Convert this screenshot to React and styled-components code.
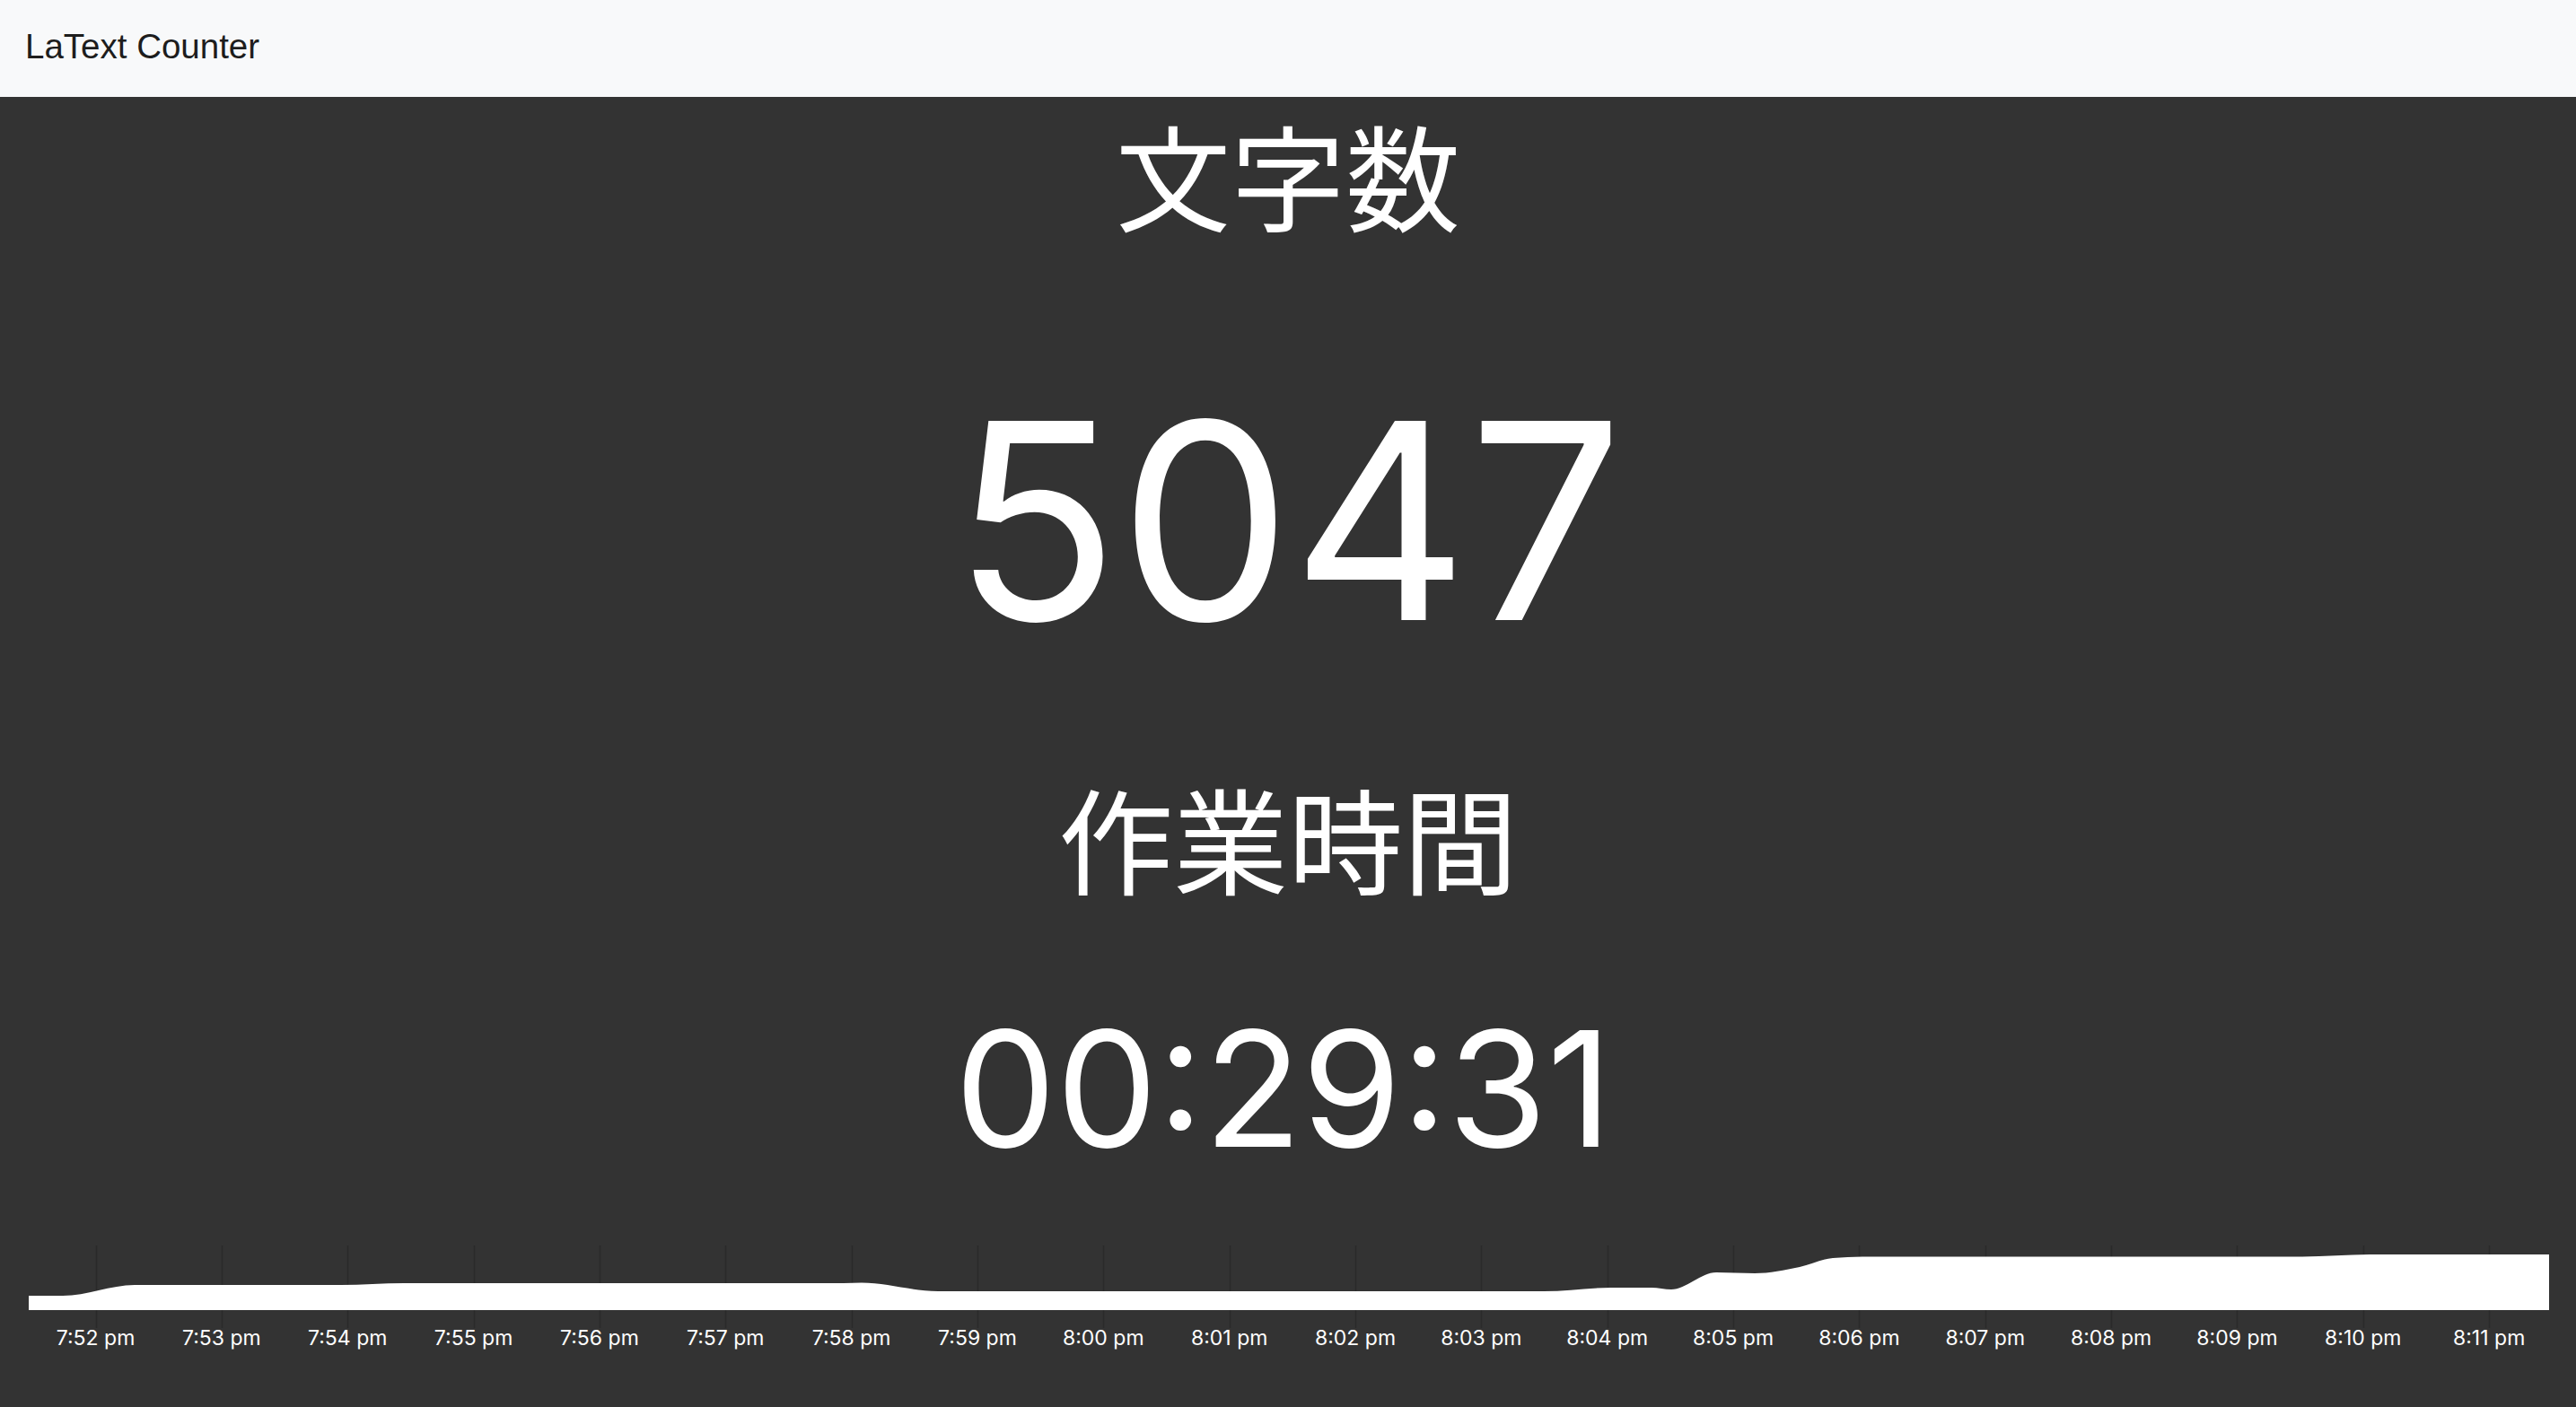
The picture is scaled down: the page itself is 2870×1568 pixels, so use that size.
import React from "react";
import styled, { createGlobalStyle } from "styled-components";

const Global = createGlobalStyle`
  html, body {
    margin: 0;
    padding: 0;
    height: 100%;
    background: #333333;
  }
  #root {
    min-height: 100%;
  }
`;

const Page = styled.div`
  display: flex;
  flex-direction: column;
  min-height: 1568px;
  background: #333333;
  font-family: "Liberation Sans", Arial, sans-serif;
`;

const Navbar = styled.nav`
  display: flex;
  align-items: center;
  height: 108px;
  padding: 0 0 4px 28px;
  box-sizing: border-box;
  background: #f8f9fa;
`;

const Brand = styled.span`
  font-family: "Liberation Sans", Arial, sans-serif;
  font-size: 38.5px;
  line-height: 1;
  color: #1d1d1d;
`;

const Main = styled.main`
  display: flex;
  flex-direction: column;
  align-items: center;
  color: #ffffff;
`;

const Heading = styled.div`
  font-family: "Noto Sans CJK JP", "Noto Sans CJK SC", sans-serif;
  font-size: 128px;
  line-height: 1;
  margin-top: ${(p) => p.$gap}px;
  white-space: nowrap;
`;

const Value = styled.div`
  font-family: Inter, "Liberation Sans", Arial, sans-serif;
  font-size: ${(p) => p.$size}px;
  line-height: 1;
  margin-top: ${(p) => p.$gap}px;
  padding-right: ${(p) => p.$shift || 0}px;
  white-space: nowrap;
`;

const ChartWrap = styled.div`
  margin-top: ${(p) => p.$gap}px;
  width: 100%;
  height: 150px;
`;

const ChartSvg = styled.svg`
  display: block;
  width: 100%;
  height: 150px;
`;

const TickLabel = styled.text`
  font-family: Inter, "Liberation Sans", Arial, sans-serif;
  font-size: 23px;
  fill: #ffffff;
`;

const points = [
  [32, 74], [70, 74], [150, 62], [380, 62], [450, 60], [940, 60], [960, 59.5],
  [1045, 69], [1720, 69], [1795, 65], [1840, 65], [1862, 67], [1912, 48],
  [1955, 49], [2005, 42], [2042, 32], [2075, 30.5], [2565, 30.5], [2640, 28], [2840, 28],
];

function monotonePath(pts, base) {
  const n = pts.length;
  const s = [];
  const h = [];
  for (let i = 0; i < n - 1; i++) {
    h.push(pts[i + 1][0] - pts[i][0]);
    s.push((pts[i + 1][1] - pts[i][1]) / h[i]);
  }
  const t = new Array(n).fill(0);
  t[0] = s[0];
  t[n - 1] = s[n - 2];
  for (let i = 1; i < n - 1; i++) {
    const s0 = s[i - 1];
    const s1 = s[i];
    const p = (s0 * h[i] + s1 * h[i - 1]) / (h[i - 1] + h[i]);
    t[i] =
      (Math.sign(s0) + Math.sign(s1)) *
        Math.min(Math.abs(s0), Math.abs(s1), 0.5 * Math.abs(p)) || 0;
  }
  let d = `M${pts[0][0]},${base} L${pts[0][0]},${pts[0][1]}`;
  for (let i = 0; i < n - 1; i++) {
    const [x0, y0] = pts[i];
    const [x1, y1] = pts[i + 1];
    const dx = (x1 - x0) / 3;
    d += ` C${x0 + dx},${y0 + dx * t[i]} ${x1 - dx},${y1 - dx * t[i + 1]} ${x1},${y1}`;
  }
  d += ` L${pts[n - 1][0]},${base} Z`;
  return d;
}

const labels = [
  "7:52 pm", "7:53 pm", "7:54 pm", "7:55 pm", "7:56 pm", "7:57 pm", "7:58 pm",
  "7:59 pm", "8:00 pm", "8:01 pm", "8:02 pm", "8:03 pm", "8:04 pm", "8:05 pm",
  "8:06 pm", "8:07 pm", "8:08 pm", "8:09 pm", "8:10 pm", "8:11 pm",
];

function Chart() {
  const step = 140.35;
  const x0 = 106.5;
  return (
    <ChartWrap $gap={67}>
      <ChartSvg viewBox="0 0 2870 150" preserveAspectRatio="none">
        {labels.map((l, i) => {
          const x = Math.round(x0 + i * step) + 0.5;
          return (
            <line
              key={"g" + i}
              x1={x}
              x2={x}
              y1={18}
              y2={110}
              stroke="#2a2a2a"
              strokeWidth="1.5"
            />
          );
        })}
        <path d={monotonePath(points, 90)} fill="#ffffff" />
        {labels.map((l, i) => (
          <TickLabel
            key={"t" + i}
            x={x0 + i * step}
            y={129}
            textAnchor="middle"
          >
            {l}
          </TickLabel>
        ))}
      </ChartSvg>
    </ChartWrap>
  );
}

export default function App() {
  return (
    <>
      <Global />
      <Page>
        <Navbar>
          <Brand>LaText Counter</Brand>
        </Navbar>
        <Main>
          <Heading $gap={22}>文字数</Heading>
          <Value $size={305} $gap={170}>5047</Value>
          <Heading $gap={136}>作業時間</Heading>
          <Value $size={179} $gap={127} $shift={10}>00:29:31</Value>
          <Chart />
        </Main>
      </Page>
    </>
  );
}
